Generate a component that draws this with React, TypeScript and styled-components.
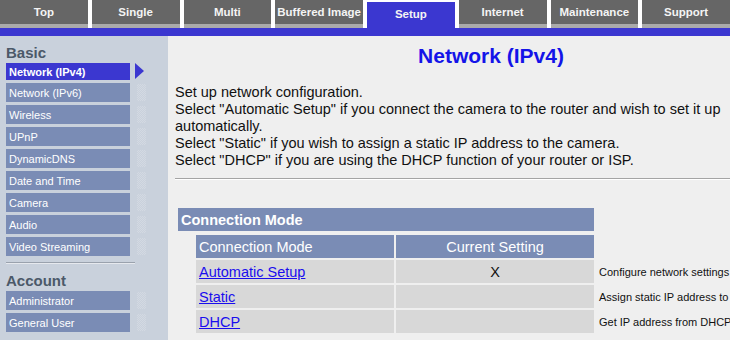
import styled, { createGlobalStyle } from 'styled-components';

const GlobalStyle = createGlobalStyle`
  html, body {
    margin: 0;
    padding: 0;
    background: #ffffff;
    overflow: hidden;
  }
  body {
    font-family: "Liberation Sans", Arial, Helvetica, sans-serif;
    width: 730px;
    height: 340px;
  }
`;

const BLUE = '#3b37d0';
const SLATE = '#7a8cb5';

const tabs = ['Top', 'Single', 'Multi', 'Buffered Image', 'Setup', 'Internet', 'Maintenance', 'Support'];

const basicMenu = [
  'Network (IPv4)',
  'Network (IPv6)',
  'Wireless',
  'UPnP',
  'DynamicDNS',
  'Date and Time',
  'Camera',
  'Audio',
  'Video Streaming',
];

const accountMenu = ['Administrator', 'General User'];

const modes = [
  { name: 'Automatic Setup', current: true, note: 'Configure network settings automatically' },
  { name: 'Static', current: false, note: 'Assign static IP address to the camera' },
  { name: 'DHCP', current: false, note: 'Get IP address from DHCP server' },
];

const TabBar = styled.div`
  display: flex;
  gap: 4px;
  height: 28px;
  align-items: flex-end;
`;

const Tab = styled.div<{ $active?: boolean }>`
  flex: 1;
  display: flex;
  align-items: center;
  justify-content: center;
  box-sizing: border-box;
  height: ${(p) => (p.$active ? '26px' : '28px')};
  padding-bottom: ${(p) => (p.$active ? '2px' : '0')};
  background: ${(p) => (p.$active ? BLUE : '#666666')};
  border-bottom: ${(p) => (p.$active ? 'none' : '4px solid #aaaaaa')};
  color: #f4f4f4;
  font-size: 11.5px;
  font-weight: bold;
  white-space: nowrap;
`;

const BlueBar = styled.div`
  height: 8px;
  background: ${BLUE};
`;

const Layout = styled.div`
  display: flex;
  height: 304px;
`;

const Sidebar = styled.nav`
  width: 168px;
  flex-shrink: 0;
  box-sizing: border-box;
  padding: 8px 0 0 6px;
  background: #c9d1dc;
`;

const SideHeading = styled.div`
  font-size: 15px;
  line-height: 17px;
  font-weight: bold;
  color: #4b5969;
  margin-bottom: 2px;
`;

const SideItem = styled.div<{ $active?: boolean }>`
  position: relative;
  width: 124px;
  box-sizing: border-box;
  height: ${(p) => (p.$active ? '17px' : '19px')};
  margin-bottom: 3px;
  padding-left: 3px;
  display: flex;
  align-items: center;
  background: ${(p) => (p.$active ? BLUE : SLATE)};
  color: #ffffff;
  font-size: 11px;
  font-weight: ${(p) => (p.$active ? 'bold' : 'normal')};
  white-space: nowrap;

  &::after {
    content: '';
    position: absolute;
    top: ${(p) => (p.$active ? '0' : '1px')};
    left: ${(p) => (p.$active ? '129px' : '131px')};
    ${(p) =>
      p.$active
        ? `
      border-top: 8px solid transparent;
      border-bottom: 8px solid transparent;
      border-left: 9px solid ${BLUE};
    `
        : `
      width: 9px;
      height: 17px;
      background: repeating-conic-gradient(#d3d9e2 0 25%, #c9d1dc 0 50%) 0 0 / 2px 2px;
    `}
  }
`;

const SideRule = styled.div`
  width: 129px;
  margin: 6px 0 8px;
  border-top: 1px solid #9aa2ad;
  border-bottom: 1px solid #e6e9ee;
`;

const Main = styled.main`
  flex: 1;
  background: #efefef;
  padding-left: 7px;
  overflow: hidden;
`;

const Content = styled.div`
  width: 632px;
`;

const Title = styled.h1`
  margin: 8px 0 0;
  font-size: 21px;
  line-height: 24px;
  font-weight: bold;
  text-align: center;
  color: #1414e8;
`;

const Intro = styled.p`
  width: 600px;
  margin: 16px 0 0;
  font-size: 14.5px;
  line-height: 17px;
  color: #111111;
`;

const Rule = styled.hr`
  width: 600px;
  margin: 9px 0 0;
  border: none;
  border-top: 1px solid #a4a4a4;
  border-bottom: 1px solid #ffffff;
`;

const Section = styled.section`
  margin: 28px 0 0 3px;
`;

const SectionBar = styled.div`
  width: 416px;
  height: 23px;
  box-sizing: border-box;
  padding-left: 3px;
  display: flex;
  align-items: center;
  background: ${SLATE};
  color: #ffffff;
  font-size: 14.5px;
  font-weight: bold;
`;

const ModeGrid = styled.div`
  display: grid;
  grid-template-columns: 198px 198px auto;
  grid-auto-rows: 23px;
  gap: 2px;
  margin: 4px 0 0 18px;
`;

const HeadCell = styled.div<{ $center?: boolean }>`
  display: flex;
  align-items: center;
  justify-content: ${(p) => (p.$center ? 'center' : 'flex-start')};
  padding-left: ${(p) => (p.$center ? '0' : '3px')};
  background: ${SLATE};
  color: #ffffff;
  font-size: 14.5px;
`;

const Cell = styled.div<{ $center?: boolean }>`
  display: flex;
  align-items: center;
  justify-content: ${(p) => (p.$center ? 'center' : 'flex-start')};
  padding-left: ${(p) => (p.$center ? '0' : '3px')};
  background: #d8d8d8;
  color: #111111;
  font-size: 14.5px;
`;

const ModeLink = styled.a`
  color: #1a0dee;
  text-decoration: underline;
  cursor: pointer;
`;

const Note = styled.div`
  display: flex;
  align-items: center;
  padding-left: 3px;
  font-size: 11px;
  color: #111111;
  white-space: nowrap;
`;

export default function App() {
  return (
    <>
      <GlobalStyle />
      <TabBar>
        {tabs.map((t) => (
          <Tab key={t} $active={t === 'Setup'}>
            {t}
          </Tab>
        ))}
      </TabBar>
      <BlueBar />
      <Layout>
        <Sidebar>
          <SideHeading>Basic</SideHeading>
          {basicMenu.map((m, i) => (
            <SideItem key={m} $active={i === 0}>
              {m}
            </SideItem>
          ))}
          <SideRule />
          <SideHeading>Account</SideHeading>
          {accountMenu.map((m) => (
            <SideItem key={m}>{m}</SideItem>
          ))}
        </Sidebar>
        <Main>
          <Content>
            <Title>Network (IPv4)</Title>
            <Intro>
              Set up network configuration.
              <br />
              Select "Automatic Setup" if you connect the camera to the router and wish to set it up automatically.
              <br />
              Select "Static" if you wish to assign a static IP address to the camera.
              <br />
              Select "DHCP" if you are using the DHCP function of your router or ISP.
            </Intro>
            <Rule />
            <Section>
              <SectionBar>Connection Mode</SectionBar>
              <ModeGrid>
                <HeadCell>Connection Mode</HeadCell>
                <HeadCell $center>Current Setting</HeadCell>
                <div />
                {modes.map((m) => (
                  <>
                    <Cell key={m.name + '-name'}>
                      <ModeLink>{m.name}</ModeLink>
                    </Cell>
                    <Cell key={m.name + '-cur'} $center>
                      {m.current ? 'X' : ''}
                    </Cell>
                    <Note key={m.name + '-note'}>{m.note}</Note>
                  </>
                ))}
              </ModeGrid>
            </Section>
          </Content>
        </Main>
      </Layout>
    </>
  );
}
